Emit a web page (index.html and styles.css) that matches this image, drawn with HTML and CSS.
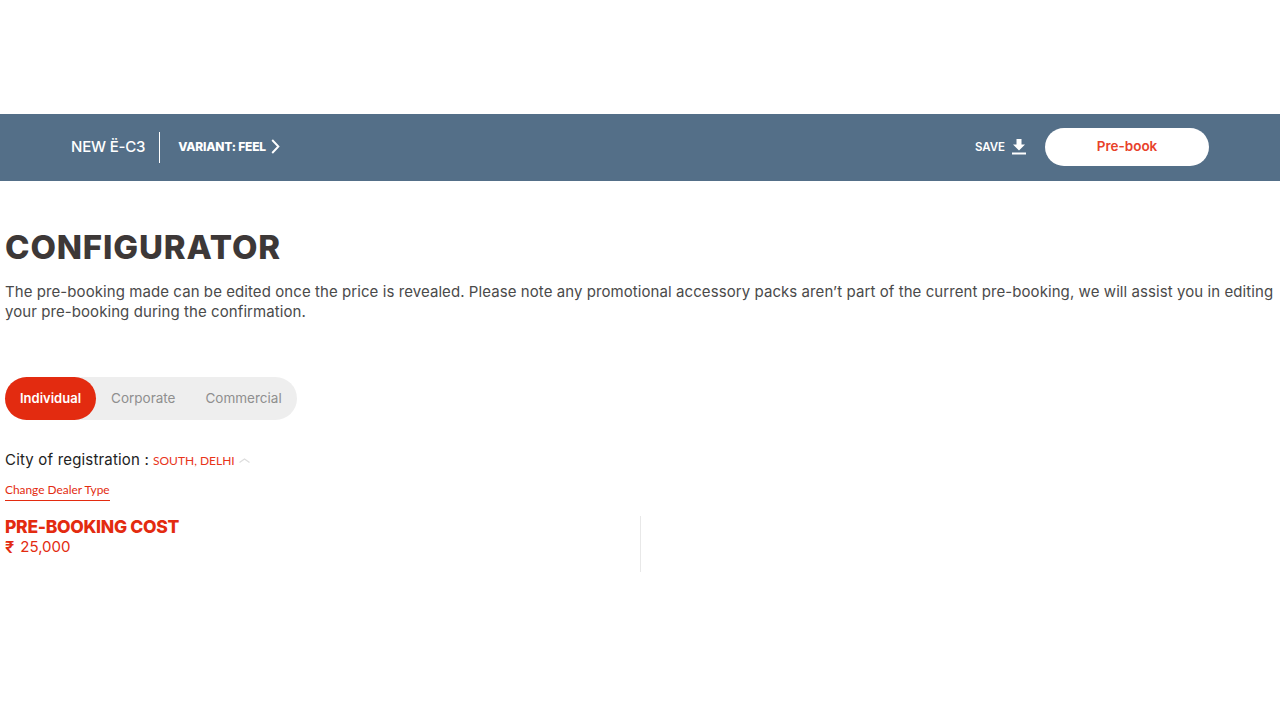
FILE: index.html
```html
<!DOCTYPE html>
<html lang="en">
<head>
<meta charset="utf-8">
<title>Configurator</title>
<link rel="stylesheet" href="styles.css">
</head>
<body>
<header class="bar">
  <div class="bar-left">
    <span class="model">NEW Ë-C3</span>
    <span class="variant"><span class="variant-text">VARIANT: FEEL</span>
      <svg class="chev" width="9" height="15" viewBox="0 0 9 15"><path d="M1.2 1l6.2 6.5-6.2 6.5" fill="none" stroke="#fff" stroke-width="1.9"/></svg>
    </span>
  </div>
  <div class="bar-right">
    <span class="save">SAVE</span>
    <svg class="dl" width="14" height="16" viewBox="0 0 14 16"><path d="M4.5 0h5v5.5H13L7 11.5 1 5.5h3.5z" fill="#fff"/><rect y="13.5" width="14" height="2" fill="#fff"/></svg>
    <a class="prebook">Pre-book</a>
  </div>
</header>
<main class="content">
  <h1 class="title">CONFIGURATOR</h1>
  <p class="intro">The pre-booking made can be edited once the price is revealed. Please note any promotional accessory packs aren’t part of the current pre-booking, we will assist you in editing your pre-booking during the confirmation.</p>
  <div class="tabs">
    <span class="tab active">Individual</span>
    <span class="tab">Corporate</span>
    <span class="tab">Commercial</span>
  </div>
  <div class="city">
    <span class="city-label">City of registration :</span>
    <span class="city-value">SOUTH, DELHI</span>
    <svg class="caret" width="11" height="5" viewBox="0 0 11 5"><path d="M.5 4.5L5.5 1l5 3.5" fill="none" stroke="#ddd" stroke-width="1.2"/></svg>
  </div>
  <a class="dealer">Change Dealer Type</a>
  <section class="cost-row">
    <div class="cost">
      <div class="cost-title">PRE-BOOKING COST</div>
      <div class="cost-value"><span class="rupee">₹</span><span>25,000</span></div>
    </div>
    <div class="cost-empty"></div>
  </section>
</main>
</body>
</html>
```
FILE: styles.css
```css
* { box-sizing: border-box; }
html, body { margin: 0; padding: 0; background: #fff; }
body { font-family: "Inter", "Liberation Sans", sans-serif; padding-top: 114px; width: 1280px; height: 720px; overflow: hidden; }
.bar { height: 67px; background: #546f88; display: flex; align-items: center; justify-content: space-between; padding: 0 71px 1px; color: #fff; }
.bar-left { display: flex; align-items: center; }
.model { font-size: 15px; font-weight: 500; letter-spacing: -0.2px; padding-right: 14px; height: 31px; line-height: 29px; border-right: 1px solid #fff; }
.variant { font-size: 12px; font-weight: 800; letter-spacing: -0.2px; margin-left: 18px; display: flex; align-items: center; gap: 5px; }
.variant-text { padding-bottom: 2px; }
.chev { margin-bottom: 1px; }
.bar-right { display: flex; align-items: center; }
.save { font-size: 11.5px; font-weight: 600; letter-spacing: -0.05px; }
.dl { margin-left: 7px; }
.prebook { width: 164px; height: 38px; margin-left: 19px; padding-bottom: 2px; border-radius: 19px; background: #fff; color: #e8412a; font-size: 13.5px; font-weight: 600; display: flex; align-items: center; justify-content: center; }
.content { padding: 0 5px; }
.title { margin: 47px 0 0; font-size: 33px; line-height: 38px; font-weight: 800; letter-spacing: 0.85px; color: #3d3837; }
.intro { margin: 16px 0 0; font-size: 15px; line-height: 20px; letter-spacing: 0.075px; color: #4a4a4a; width: 1275px; }
.tabs { display: inline-flex; margin-top: 55px; height: 43px; background: #eee; border-radius: 22px; }
.tab { display: flex; align-items: center; padding: 0 15px 1px; font-size: 13.5px; color: #8f8f8f; }
.tab.active { background: #e32b10; color: #fff; font-size: 13px; font-weight: 600; border-radius: 22px; }
.city { display: flex; align-items: center; margin-top: 28px; height: 22px; }
.city-label { font-size: 15px; letter-spacing: 0.18px; color: #222; }
.city-value { font-family: "Lato", sans-serif; font-size: 12px; margin-top: 2px; color: #e8341a; margin-left: 4px; }
.caret { margin-left: 4px; margin-top: 3px; }
.dealer { display: inline-block; margin-top: 10px; font-family: "Lato", sans-serif; font-size: 11.9px; line-height: 20px; color: #e32b10; border-bottom: 1px solid #e32b10; }
.cost-row { display: flex; margin-top: 15px; height: 56px; }
.cost { width: 636px; border-right: 1px solid #e8e8e8; }
.cost-title { font-size: 17.5px; line-height: 22px; font-weight: 800; letter-spacing: -0.3px; color: #e32b10; }
.cost-value { display: flex; gap: 6px; font-size: 15px; line-height: 18px; color: #e32b10; }
.rupee { font-size: 16.5px; font-weight: 600; }
```
